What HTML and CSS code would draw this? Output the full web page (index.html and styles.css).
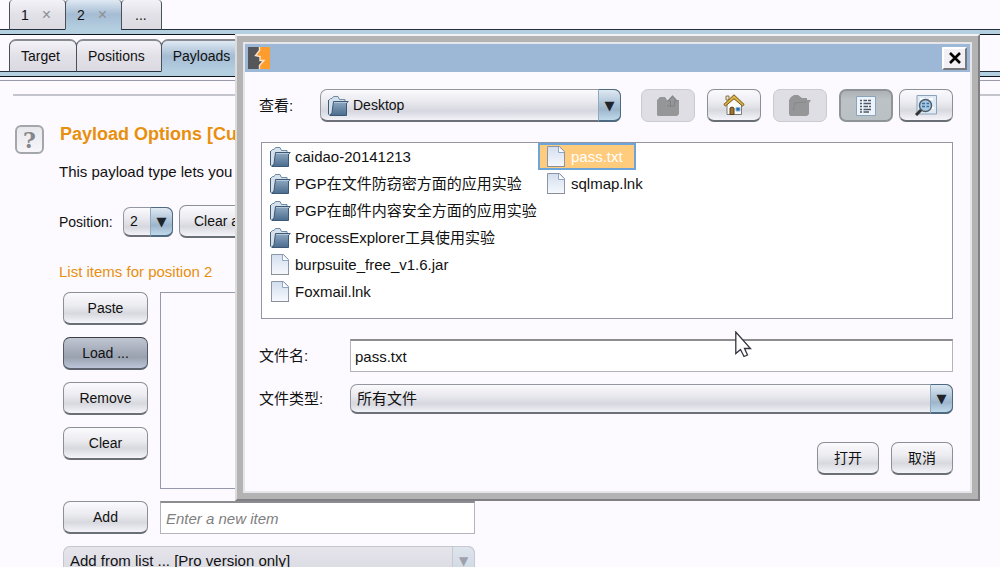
FILE: index.html
```html
<!DOCTYPE html>
<html lang="zh-CN">
<head>
<meta charset="utf-8">
<title>Payloads</title>
<link rel="stylesheet" href="styles.css">
</head>
<body>
<svg class="defs" aria-hidden="true">
  <defs>
    <linearGradient id="folderFill" x1="0" y1="0" x2="0" y2="1"><stop offset="0" stop-color="#8fa9c2"/><stop offset="1" stop-color="#4a6c8e"/></linearGradient>
    <linearGradient id="paperFill" x1="0" y1="0" x2="0" y2="1"><stop offset="0" stop-color="#d3deee"/><stop offset="1" stop-color="#f6f9fd"/></linearGradient>
    <symbol id="folder" viewBox="0 0 22 22">
      <path d="M1.500 19V5.500L3.500 3.500H5L6.500 1.500H11L12.500 4.500H18V7.500L17 20H2Z" fill="#d4e0ec" stroke="#6d8aa5"/>
      <path d="M1.500 5V19" stroke="#3f5a75"/>
      <path d="M6.500 6.500H21.300L19.500 8V20.500H3L5 17.500Z" fill="url(#folderFill)" stroke="#3c5874"/>
      <path d="M7 7.500H20" stroke="#b5c8da"/>
    </symbol>
    <symbol id="file" viewBox="0 0 22 22">
      <path d="M2.500 .500H14.500L19.500 5.500V20.500H2.500Z" fill="url(#paperFill)" stroke="#8d96a6"/>
      <path d="M13.500 1V6.500H19" fill="#fff" stroke="#8fa6c4"/>
      <path d="M2 20.500H20" stroke="#8a8e98"/>
    </symbol>
  </defs>
</svg>

<nav class="tabs tabs-top">
  <button class="tab">1 <span class="tab-x">×</span></button>
  <button class="tab active">2 <span class="tab-x">×</span></button>
  <button class="tab tab-more">...</button>
</nav>
<nav class="tabs tabs-sub">
  <button class="tab">Target</button>
  <button class="tab">Positions</button>
  <button class="tab active">Payloads</button>
</nav>

<main class="page">
  <section class="options">
    <button class="help">?</button>
    <div class="options-body">
      <h1>Payload Options [Cu</h1>
      <p class="intro">This payload type lets you</p>
      <div class="position-row">
        <label for="position">Position:</label>
        <span class="combo combo-small">
          <select id="position"><option>2</option></select>
          <span class="arrow">▼</span>
        </span>
        <button class="btn btn-clear-all">Clear all</button>
      </div>
      <h2>List items for position 2</h2>
      <div class="editor">
        <div class="actions">
          <button class="btn">Paste</button>
          <button class="btn pressed">Load ...</button>
          <button class="btn">Remove</button>
          <button class="btn">Clear</button>
        </div>
        <div class="items"></div>
        <button class="btn">Add</button>
        <input class="field new-item" type="text" placeholder="Enter a new item" aria-label="New item">
        <span class="combo combo-disabled">
          <select disabled aria-label="Add from list"><option>Add from list ... [Pro version only]</option></select>
          <span class="arrow">▼</span>
        </span>
      </div>
    </div>
  </section>
</main>

<div class="dialog" role="dialog">
  <div class="dialog-inner">
    <header class="titlebar">
      <svg class="logo" viewBox="0 0 22 22" width="22" height="22">
        <path d="M0 0H22V22H0Z" fill="#ff9c2e"/>
        <path d="M0 0H12V3L7.500 9H12V13H15L11 18V22H0Z" fill="#55565a"/>
        <path d="M11.500 0V3.500L7.500 8.500L12 9.500V13.500H16L11.500 18.500V22" fill="none" stroke="#fbe5cf" stroke-width="1.400"/>
      </svg>
      <button class="close" aria-label="Close">
        <svg viewBox="0 0 12 12" width="12" height="12"><path d="M1 1L11 11M11 1L1 11" stroke="#000" stroke-width="2.600"/></svg>
      </button>
    </header>
    <div class="dialog-body">
      <div class="toolbar">
        <label for="folder-select">查看:</label>
        <span class="combo combo-folder">
          <select id="folder-select"><option>Desktop</option></select>
          <svg class="combo-icon" width="22" height="22"><use href="#folder"/></svg>
          <span class="arrow">▼</span>
        </span>
        <button class="btn tool off" disabled aria-label="Up">
          <svg viewBox="0 0 22 22" width="22" height="22"><path d="M0 20V5L3 2H8L10 5H11L15.500 0L20 5H22V19L20 21H1Z" fill="#959698"/><path d="M13.500 12V6H11L15.500 1.500L20 6H17.500V11H10" fill="none" stroke="#808184"/></svg>
        </button>
        <button class="btn tool" aria-label="Home">
          <svg viewBox="0 0 22 22" width="22" height="22">
            <path d="M4 10V20.500H18.500V10L11 3Z" fill="#fbfbf7" stroke="#7b7c78"/>
            <path d="M3 2H6V6H3Z" fill="#ece6d0" stroke="#6e5b2a" stroke-width=".8"/>
            <path d="M.8 10.500L11 .8L21.200 10.500L19.500 12L11 4.800L2.500 12Z" fill="#dcb244" stroke="#73571a"/>
            <path d="M7 20.500V14Q9 12 11 14V20.500Z" fill="#9c7434" stroke="#5d4112"/>
            <path d="M13 13.500H17V17H13Z" fill="#2868a8" stroke="#8db8dd"/>
          </svg>
        </button>
        <button class="btn tool off" disabled aria-label="New folder">
          <svg viewBox="0 0 22 22" width="22" height="22"><path d="M0 19V5L2 2L5 0H9L13 3H18V5H22L20 8V19L18 21H1Z" fill="#959698"/><path d="M5 8L17 7M6 8L4 16" stroke="#88898b" fill="none"/></svg>
        </button>
        <button class="btn tool on" aria-label="List">
          <svg viewBox="0 0 22 22" width="22" height="22">
            <path d="M1.500 1.500H20.500V20.500H1.500Z" fill="#eef4fb" stroke="#8ba3ba"/>
            <path d="M5 5.500H7M5 8.500H7M5 11.500H7M5 14.500H7M5 17H7M8.500 5.500H12M13 5.500H16M8.500 8.500H16M8.500 11.500H13M14 11.500H16M8.500 14.500H16M8.500 17H14" stroke="#4c5665" stroke-width="1.300"/>
          </svg>
        </button>
        <button class="btn tool last" aria-label="Details">
          <svg viewBox="0 0 22 22" width="22" height="22">
            <path d="M2 1.500H21.500V20H2Z" fill="#dfeaf5" stroke="#8ba3ba"/>
            <path d="M5 5H9M14 5H18M17 14H19" stroke="#fff" stroke-width="2"/>
            <path d="M6.500 15.500L1 21" stroke="#333" stroke-width="3"/>
            <circle cx="10.500" cy="11.500" r="6" fill="#a8c9e4" stroke="#515e6b" stroke-width="1.500"/>
            <path d="M7 9.500H10M11.500 9.500H14M7 12.500H10M11.500 12.500H14" stroke="#396f9f" stroke-width="1.600"/>
          </svg>
        </button>
      </div>

      <ul class="files">
        <li><svg width="22" height="22"><use href="#folder"/></svg><span>caidao-20141213</span></li>
        <li><svg width="22" height="22"><use href="#folder"/></svg><span>PGP在文件防窃密方面的应用实验</span></li>
        <li><svg width="22" height="22"><use href="#folder"/></svg><span>PGP在邮件内容安全方面的应用实验</span></li>
        <li><svg width="22" height="22"><use href="#folder"/></svg><span>ProcessExplorer工具使用实验</span></li>
        <li><svg width="22" height="22"><use href="#file"/></svg><span>burpsuite_free_v1.6.jar</span></li>
        <li><svg width="22" height="22"><use href="#file"/></svg><span>Foxmail.lnk</span></li>
        <li class="selected"><svg width="22" height="22"><use href="#file"/></svg><span>pass.txt</span></li>
        <li><svg width="22" height="22"><use href="#file"/></svg><span>sqlmap.lnk</span></li>
      </ul>

      <div class="form">
        <label for="filename">文件名:</label>
        <input class="field" id="filename" type="text" value="pass.txt">
        <label for="filetype">文件类型:</label>
        <span class="combo">
          <select id="filetype"><option>所有文件</option></select>
          <span class="arrow">▼</span>
        </span>
      </div>

      <div class="footer">
        <button class="btn">打开</button>
        <button class="btn">取消</button>
      </div>
    </div>
  </div>
</div>

<svg class="cursor" viewBox="0 0 17 27" width="17" height="27" aria-hidden="true">
  <path d="M.8 1V22.500L5.500 18.500L9 25.500L12.500 24L9.500 17.500H15.500Z" fill="#fff" stroke="#34343e" stroke-width="1.300"/>
</svg>
</body>
</html>
```
FILE: styles.css
```css
* { box-sizing: border-box; }

body {
  margin: 0;
  height: 100vh;
  overflow: hidden;
  position: relative;
  background: #fdfaff;
  color: #111;
  font: 14px/20px "Liberation Sans", "Noto Sans CJK SC", sans-serif;
}

button, input, select { font: inherit; color: inherit; margin: 0; }
h1, h2, p, ul { margin: 0; padding: 0; }

.defs { position: absolute; width: 0; height: 0; }

/* Tab strips */
.tabs {
  display: flex;
  padding-left: 9px;
  border-bottom: 1px solid #10151c;
  box-shadow: inset 0 -4px #b4cfe0, inset 0 -5px #26303c;
  padding-bottom: 4px;
}
.tabs-top { height: 35px; }
.tabs-sub { height: 42px; padding-top: 4px; }
.tab {
  display: flex;
  align-items: center;
  justify-content: center;
  padding: 0 16px 0 11px;
  border: 1px solid #4b4f5a;
  border-top: 2px solid #898b93;
  border-bottom-color: #26303c;
  border-radius: 7px 7px 0 0;
  margin-right: -1px;
  background: linear-gradient(#f3f2f7, #e2e1e8 50%, #dbdae2);
  font-size: 14px;
}
.tabs-top .tab {
  justify-content: flex-start;
  gap: 13px;
  min-width: 57px;
  padding: 0 11px;
  border-top: 0;
  border-radius: 4px 4px 0 0;
}
.tabs-top .tab-more { min-width: 41px; padding: 0 13px; }
.tab.active {
  border-bottom-color: #b4cfe0;
  background: linear-gradient(#dfe9f3, #a5bcd3 50%, #b4cfe0);
}
.tab-x { color: #8e8e94; font-size: 16px; }

/* Options page */
.page { padding-top: 3px; }
.page::before {
  content: "";
  display: block;
  height: 13px;
  border-top: 1px solid #9a9bab;
}
.options {
  display: grid;
  grid-template-columns: 28px 1fr;
  column-gap: 16px;
  margin-left: 13px;
  padding: 25px 0 0 2px;
  border-top: 2px solid #c3c4cc;
}
.help {
  width: 29px;
  height: 29px;
  margin-top: 4px;
  padding: 0;
  border: 2px solid #a3a7ac;
  border-radius: 6px;
  background: linear-gradient(#e8e8ec, #f6f6fa);
  color: #85868a;
  font: bold 22px/24px "DejaVu Serif", serif;
}
.options-body { min-width: 0; }
h1 { padding-left: 1px; color: #e88f0c; font-size: 18px; line-height: 26px; white-space: nowrap; }
.intro { margin-top: 14px; font-size: 15px; line-height: 22px; }
.position-row { display: flex; align-items: center; height: 33px; margin-top: 22px; }
.position-row label { width: 64px; }
.combo-small { width: 50px; }
h2 { margin-top: 23px; color: #e88f0c; font-size: 15px; font-weight: normal; line-height: 22px; }
.editor {
  display: grid;
  grid-template-columns: 85px 315px;
  gap: 12px;
  padding-left: 4px;
  margin-top: 9px;
}
.actions { display: grid; row-gap: 12px; height: 197px; align-content: start; }
.items { border: 1px solid #9698ab; background: #fdfaff; }
.combo-disabled { grid-column: 1 / -1; }

/* Buttons */
.btn {
  height: 33px;
  padding: 0;
  border: 1px solid #8b8f96;
  border-bottom: 2px solid #6a6e75;
  border-radius: 7px;
  background: linear-gradient(#fbfafd, #ececf1 40%, #d8d9de 68%, #f4f4fa);
  font-size: 14px;
}
.btn-clear-all { margin-left: 6px; padding: 0 14px; }
.btn.pressed {
  border-color: #383c46 #555a66 #5c626e;
  background: linear-gradient(#c1c6d2, #a1a8b6 50%, #9aa2b0 65%, #bcc6d8);
}

/* Combo boxes and text fields */
.combo { display: grid; grid-template-columns: 1fr 23px; height: 30px; }
.combo select {
  grid-area: 1 / 1 / 2 / 3;
  appearance: none;
  width: 100%;
  padding: 0 28px 0 6px;
  border: 1px solid #9497a0;
  border-bottom: 2px solid #6d7078;
  border-radius: 7px;
  background: linear-gradient(#fbfafd, #e8e8ee 40%, #d6d7df 70%, #f2f2f8);
  font-size: 14px;
}
.arrow {
  grid-area: 1 / 2;
  display: grid;
  place-items: center;
  border: 1px solid #4e6a82;
  border-left-color: #8faabd;
  border-bottom-width: 2px;
  border-radius: 0 7px 7px 0;
  background: linear-gradient(#dfe9f2, #a9c0d5 50%, #9db6cc 65%, #c0d9ea);
  color: #20242a;
  font-family: "DejaVu Sans", sans-serif;
  font-size: 13px;
  line-height: 1;
  pointer-events: none;
}
.combo-disabled select {
  opacity: 1;
  border-color: #c4c6d0;
  background: linear-gradient(#e6e5ec, #d9d9e1);
  color: #111;
  font-size: 15px;
}
.combo-disabled .arrow {
  border-color: #c4c9d3;
  background: linear-gradient(#dfe4ec, #cdd8e2);
  color: #9ca1ac;
  font-size: 12px;
}
.field {
  height: 33px;
  min-width: 0;
  padding: 0 4px;
  border: 1px solid #b3b3b9;
  border-top: 2px solid #8c8c91;
  border-radius: 0;
  background: #fff;
  font-size: 15px;
}
.new-item { padding: 0 5px; }
.new-item::placeholder { color: #808080; font-style: italic; opacity: 1; }

/* File chooser window */
.dialog {
  position: absolute;
  top: 34px;
  left: 235px;
  right: 20px;
  padding: 6px;
  border: 2px solid;
  border-color: #f2f2f2 #808084 #808084 #dcdcdc;
  background: #b3b3b3;
}
.dialog-inner { border: 2px solid #e6e5ea; background: #fdfaff; }
.titlebar {
  display: flex;
  align-items: center;
  justify-content: space-between;
  height: 28px;
  padding: 0 3px;
  background: #9db7d6;
}
.close {
  display: grid;
  place-items: center;
  width: 25px;
  height: 23px;
  padding: 0;
  border: 2px solid;
  border-color: #fff #77777c #77777c #fff;
  background: #f2f0f4;
}
.dialog-body { padding: 17px 17px 16px 14px; }
.dialog label { font-size: 15px; }
.toolbar { display: flex; align-items: center; }
.toolbar label { width: 61px; }
.combo-folder { flex: 1; height: 33px; margin-right: 8px; }
.combo-folder select { padding-left: 32px; }
.combo-icon { grid-area: 1 / 1; align-self: center; margin-left: 7px; z-index: 1; }
.tool { display: grid; place-items: center; width: 54px; margin-left: 12px; }
.tool.off { border: 1px solid #cacbd2; background: #dedee4; }
.tool.on { border: 2px solid #8f9498; background: linear-gradient(#adb1b5, #bcc2c6 30%, #bac1c4); }
.tool.last { margin-left: 6px; }

.files {
  display: grid;
  grid-template: repeat(6, 27px) / 276px;
  grid-auto-columns: 98px;
  grid-auto-flow: column;
  height: 177px;
  margin: 20px 0 0 2px;
  border: 1px solid #9496a8;
  background: #fff;
  list-style: none;
  font-size: 15px;
}
.files li {
  display: flex;
  align-items: center;
  gap: 4px;
  padding: 0 0 0 6px;
  border: 1px solid transparent;
  white-space: nowrap;
}
.files svg { flex: none; }
.files .selected { border: 2px solid #6ea5d8; padding-left: 5px; background: #ffcb7d; color: #fff; }

.form {
  display: grid;
  grid-template-columns: 91px 1fr;
  align-items: center;
  row-gap: 12px;
  margin-top: 20px;
}
.form select { font-size: 15px; }
.footer { display: flex; justify-content: flex-end; gap: 12px; margin-top: 28px; }
.footer .btn { width: 62px; }

.cursor { position: absolute; top: 331px; left: 735px; }
```
